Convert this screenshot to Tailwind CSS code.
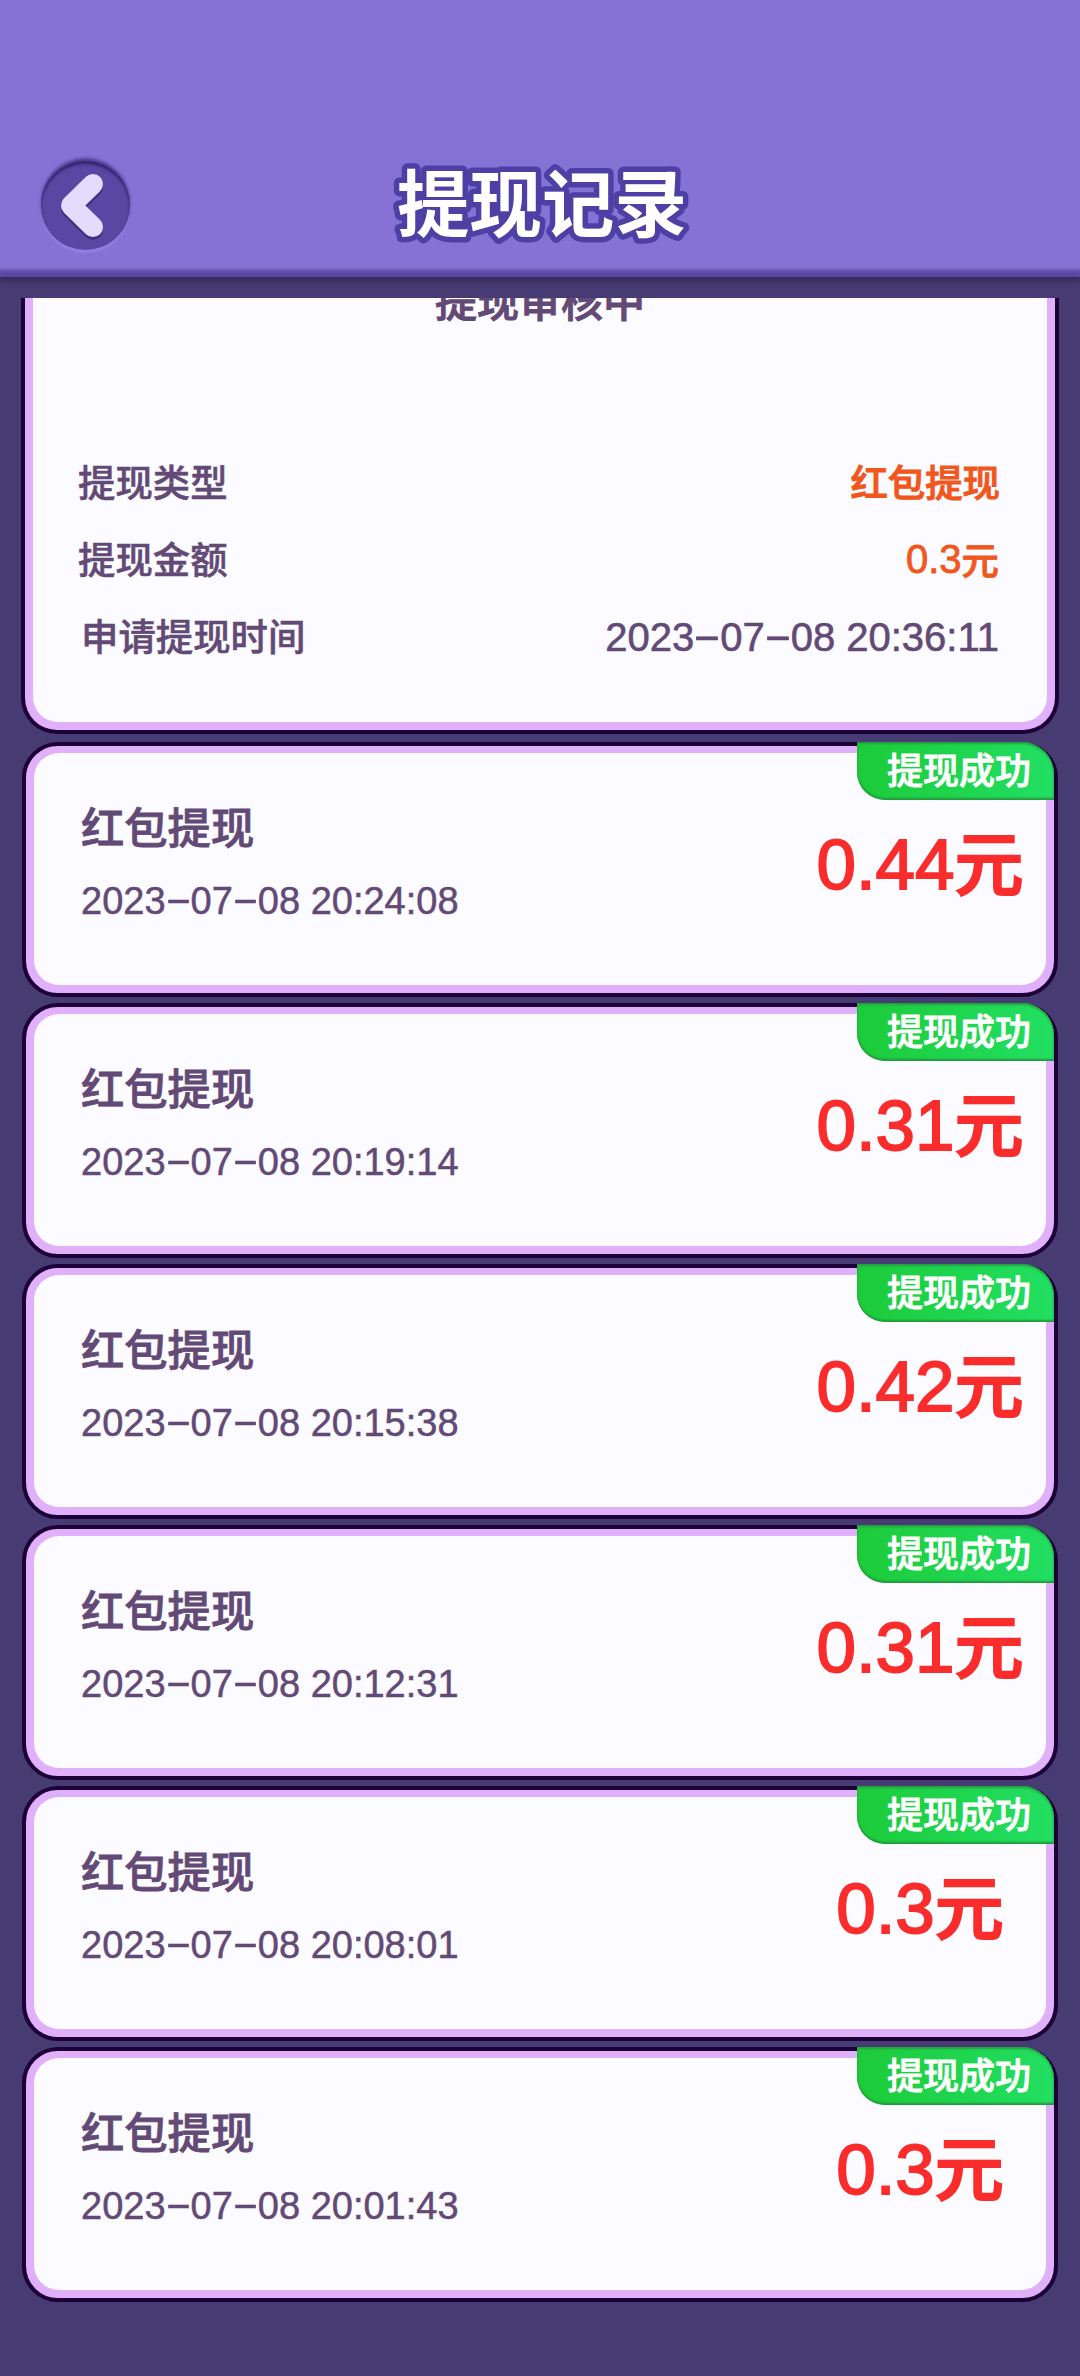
<!DOCTYPE html>
<html lang="zh-CN">
<head>
<meta charset="utf-8">
<title>提现记录</title>
<script src="https://cdn.jsdelivr.net/npm/@tailwindcss/browser@4"></script>
</head>
<body class="bg-[#463b73]">
<div class="relative flex h-[2376px] w-[1080px] flex-col overflow-hidden bg-[#463b73] font-['Liberation_Sans','Noto_Sans_CJK_SC',sans-serif] text-[#634a76]">
  <header class="relative z-10 grid h-[277px] shrink-0 grid-cols-[1fr_auto_1fr] items-start bg-linear-to-b from-[#8472d4] from-[267px] to-[#5848a4] to-[273px] px-[41px] shadow-[0_1px_6px_2px_#30264f]">
    <button class="mt-[161px] flex size-[89px] items-center justify-center rounded-full bg-[#5848a4] shadow-[0_-3px_3px_#4d3f94,0_3px_2px_#9281df,inset_0_3px_3px_#33246f]" aria-label="返回">
      <svg class="size-[89px]" viewBox="0 0 89 89" fill="none" stroke-width="20" stroke-linecap="round" stroke-linejoin="round">
        <path d="M52 26 30 47.5 52 69" stroke="#40317f"/>
        <path d="M52 23 30 44.5 52 66" stroke="#e3dcfc"/>
      </svg>
    </button>
    <h1 class="mt-[144px]">
      <svg class="h-[120px] w-[340px] overflow-visible" viewBox="0 0 340 120">
        <text x="172" y="87" text-anchor="middle" fill="#fff" stroke="#4e3fa5" stroke-width="11" stroke-linejoin="round" class="font-['Noto_Sans_CJK_SC',sans-serif] text-[72.5px] font-bold [paint-order:stroke_fill]">提现记录</text>
      </svg>
    </h1>
  </header>
  <main class="mt-[21px] flex flex-1 flex-col overflow-hidden">
    <section class="ml-[21px] flex h-[436px] w-[1038px] shrink-0 flex-col rounded-b-[36px] border-4 border-t-0 border-[#1c0037] bg-[#e0b0fb] px-[8px] pb-[8px]">
      <div class="flex flex-1 flex-col rounded-b-[25px] bg-[#fcfbff]">
        <h2 class="-mt-[25px] h-[60px] text-center text-[42px] leading-[60px] font-medium [-webkit-text-stroke:1px]">提现审核中</h2>
        <dl class="mt-[113px] flex flex-col pr-[47px] pl-[45px] text-[37.4px] leading-[77px] font-medium">
          <div class="flex h-[77px] justify-between"><dt class="[-webkit-text-stroke:.5px]">提现类型</dt><dd class="text-[#f1571d] [-webkit-text-stroke:1px]">红包提现</dd></div>
          <div class="flex h-[77px] justify-between"><dt class="[-webkit-text-stroke:.5px]">提现金额</dt><dd class="pr-[1px] text-[#f1571d] [-webkit-text-stroke:.8px]"><span class="relative -top-[2px] text-[40px] font-normal">0.3</span>元</dd></div>
          <div class="flex h-[77px] justify-between"><dt class="pl-[3px] [-webkit-text-stroke:.5px]">申请提现时间</dt><dd class="pr-[1px] text-[40px] leading-[75px] font-normal [-webkit-text-stroke:.6px]">2023<span class="inline-block w-[26px] -translate-y-[2px] scale-x-[2.1] text-center">-</span>07<span class="inline-block w-[26px] -translate-y-[2px] scale-x-[2.1] text-center">-</span>08 20:36:11</dd></div>
        </dl>
      </div>
    </section>
    <ul id="records" class="mt-[8px] ml-[22px] flex flex-col gap-[6px]"></ul>
  </main>
</div>
<script>
const records = [
  ['2023-07-08 20:24:08', '0.44'],
  ['2023-07-08 20:19:14', '0.31'],
  ['2023-07-08 20:15:38', '0.42'],
  ['2023-07-08 20:12:31', '0.31'],
  ['2023-07-08 20:08:01', '0.3'],
  ['2023-07-08 20:01:43', '0.3'],
];
const dash = '<span class="inline-block w-[25px] -translate-y-[2px] scale-x-[2.1] text-center">-</span>';
document.getElementById('records').innerHTML = records.map(([time, amount]) => `
  <li class="relative flex h-[255px] w-[1036px] rounded-[36px] border-4 border-[#1c0037] bg-[#e0b0fb] p-[8px] pt-[7px]">
    <div class="flex flex-1 justify-between rounded-[25px] bg-[#fcfbff] pl-[47px]">
      <div class="flex flex-col pt-[46px]">
        <h3 class="h-[60px] text-[43.3px] leading-[60px] font-medium [-webkit-text-stroke:.8px]">红包提现</h3>
        <time class="mt-[17px] h-[50px] text-[38px] leading-[50px] whitespace-nowrap [-webkit-text-stroke:.5px]">${time.replaceAll('-', dash)}</time>
      </div>
      <p class="mt-[63px] h-[100px] w-[252px] text-center text-[69px] leading-[100px] font-medium whitespace-nowrap text-[#fb2c2c] [-webkit-text-stroke:2px]"><span class="relative -top-[1px] text-[71px] font-normal [-webkit-text-stroke:1.8px]">${amount}</span>元</p>
    </div>
    <span class="absolute -top-[4px] right-0 h-[58px] w-[197px] rounded-tr-[32px] rounded-bl-[28px] bg-linear-to-r from-[#1ccb38] to-[#22df62] pl-[30px] text-[36px] leading-[59px] font-medium whitespace-nowrap text-white shadow-[inset_0_-2px_2px_#239a3c,inset_0_2px_2px_#259f40] [-webkit-text-stroke:.8px]">提现成功</span>
  </li>`).join('');
</script>
</body>
</html>
